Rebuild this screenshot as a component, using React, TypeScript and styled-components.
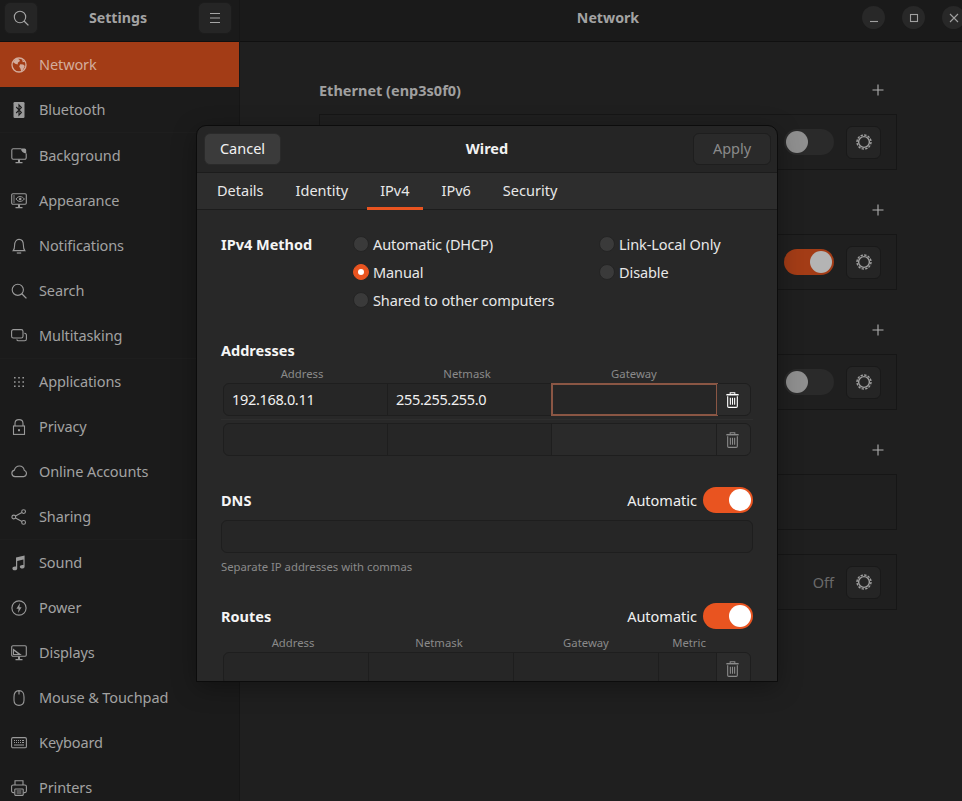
import type { ReactNode } from "react";
import styled, { createGlobalStyle } from "styled-components";

const GlobalStyle = createGlobalStyle`
  html, body {
    margin: 0;
    padding: 0;
    background: #1f1f1f;
  }
  body {
    font-family: "Noto Sans", "Open Sans", sans-serif;
    font-size: 14.5px;
  }
`;

const SIDEBAR_ICONS: Record<string, ReactNode> = {
  Network: (
    <>
      <circle cx="8" cy="8" r="7" fill="none" stroke="currentColor" strokeWidth="1.3" />
      <path d="M5 1.8l3 .4 1 1.8-2 1.4-.4 2-2.4-.6L2 5zM9.2 7.2l3 .3 1.6 1.6-1.6 3.4-2 2-.8-3-1.2-2zM11 2.4l2.6 2.4-1.8.4z" fill="currentColor" />
    </>
  ),
  Bluetooth: (
    <>
      <rect x="2.5" y="0" width="11" height="16" rx="1.2" fill="currentColor" />
      <path d="M5.2 5l5.2 5.4L8 13V3l2.4 2.6L5.2 11" fill="none" stroke="#1b1b1b" strokeWidth="1.1" />
    </>
  ),
  Background: (
    <>
      <path d="M10 .8H2.2A1.4 1.4 0 0 0 .8 2.2v7.6a1.4 1.4 0 0 0 1.4 1.4h11.6a1.4 1.4 0 0 0 1.4-1.4V5.6" fill="none" stroke="currentColor" strokeWidth="1.1" />
      <path d="M10 .4h3.6a1.6 1.6 0 0 1 1.6 1.6v3.4a5 5 0 0 1-5.2-5z" fill="currentColor" />
      <path d="M7 11.5h2V14H7zM4.5 14h7v1.2h-7z" fill="currentColor" />
    </>
  ),
  Appearance: (
    <>
      <rect x=".7" y=".7" width="14.6" height="10.6" rx="1.2" fill="none" stroke="currentColor" strokeWidth="1.1" />
      <path d="M2.2 3h1.6M2.2 5h1.6M2.2 7h1.6M2.2 9h1.6" stroke="currentColor" strokeWidth="1" />
      <path d="M5 6c2-3.2 6-3.2 8.4 0-2.4 3.2-6.4 3.2-8.4 0z" fill="none" stroke="currentColor" strokeWidth="1" />
      <circle cx="9.2" cy="6" r="1.3" fill="currentColor" />
      <path d="M7 11.5h2V14H7zM4.5 14h7v1.2h-7z" fill="currentColor" />
    </>
  ),
  Notifications: (
    <>
      <path d="M2.2 12.6c1.2-1.4 1.4-2.6 1.4-5.4 0-3.4 1.8-5.8 4.4-5.8s4.4 2.4 4.4 5.8c0 2.8.2 4 1.4 5.4z" fill="none" stroke="currentColor" strokeWidth="1.1" />
      <path d="M5.8 14.4h4.4v1.2H5.8z" fill="currentColor" />
    </>
  ),
  Search: (
    <>
      <circle cx="6.8" cy="6.8" r="5.6" fill="none" stroke="currentColor" strokeWidth="1.1" />
      <path d="M10.8 10.8l4.6 4.6" stroke="currentColor" strokeWidth="1.3" />
    </>
  ),
  Multitasking: (
    <>
      <rect x=".6" y="1.6" width="11.4" height="8.4" rx="1.8" fill="none" stroke="currentColor" strokeWidth="1.1" />
      <path d="M13.4 5.4h.4a1.6 1.6 0 0 1 1.6 1.6v4a1.8 1.8 0 0 1-1.8 1.8H7.4a1.6 1.6 0 0 1-1.6-1.4" fill="none" stroke="currentColor" strokeWidth="1.1" />
    </>
  ),
  Applications: (
    <path d="M3 3h1.6v1.6H3zM7.2 3h1.6v1.6H7.2zM11.4 3H13v1.6h-1.6zM3 7.2h1.6v1.6H3zM7.2 7.2h1.6v1.6H7.2zM11.4 7.2H13v1.6h-1.6zM3 11.4h1.6V13H3zM7.2 11.4h1.6V13H7.2zM11.4 11.4H13V13h-1.6z" fill="currentColor" />
  ),
  Privacy: (
    <>
      <rect x="2.5" y="7" width="11" height="8.4" fill="none" stroke="currentColor" strokeWidth="1.1" />
      <path d="M4 7V4.4C4 2 5.6.6 8 .6s4 1.4 4 3.8V7" fill="none" stroke="currentColor" strokeWidth="1.1" />
      <rect x="7" y="10.2" width="2" height="2" fill="currentColor" />
    </>
  ),
  "Online Accounts": (
    <path d="M4 12.6a3.3 3.3 0 0 1-.6-6.5C4 3.6 6 2 8.4 2c2.6 0 4.4 1.8 4.8 4.2a3.3 3.3 0 0 1-.6 6.4z" fill="none" stroke="currentColor" strokeWidth="1.1" />
  ),
  Sharing: (
    <>
      <circle cx="2.8" cy="8" r="1.9" fill="none" stroke="currentColor" strokeWidth="1.1" />
      <circle cx="12.6" cy="2.6" r="1.9" fill="none" stroke="currentColor" strokeWidth="1.1" />
      <circle cx="12.6" cy="13.4" r="1.9" fill="none" stroke="currentColor" strokeWidth="1.1" />
      <path d="M4.5 7l6.4-3.5M4.5 9l6.4 3.5" stroke="currentColor" strokeWidth="1.1" />
    </>
  ),
  Sound: (
    <path d="M5 2.6L13.6.4v11h-1.2V4.4L6.2 6v7.4H5zM1.4 13.4c0-1.2 1.2-1.9 2.6-1.9h2.2v1.9c0 1.2-1.2 1.9-2.4 1.9s-2.4-.7-2.4-1.9zM8.8 11.8c0-1.1 1.2-1.8 2.5-1.8h2.3v1.8c0 1.2-1.2 1.8-2.4 1.8s-2.4-.6-2.4-1.8z" fill="currentColor" />
  ),
  Power: (
    <>
      <circle cx="8" cy="8" r="7.1" fill="none" stroke="currentColor" strokeWidth="1.1" />
      <path d="M9 3L5.4 8.8h2.2L7 13l3.6-5.8H8.4z" fill="currentColor" />
    </>
  ),
  Displays: (
    <>
      <rect x=".7" y=".7" width="14.6" height="10.6" rx="1.2" fill="none" stroke="currentColor" strokeWidth="1.1" />
      <path d="M2 3.4l8.8 6.6H2zM3 6v3h4z" fill="currentColor" fillRule="evenodd" />
      <path d="M7 11.5h2V14H7zM4.5 14h7v1.2h-7z" fill="currentColor" />
    </>
  ),
  "Mouse & Touchpad": (
    <path d="M8 .6c3.4 0 5 2.2 5 6.4v3.2c0 3.4-2 5.2-5 5.2s-5-1.8-5-5.2V7C3 2.8 4.6.6 8 .6zM8 .6v4" fill="none" stroke="currentColor" strokeWidth="1.1" />
  ),
  Keyboard: (
    <>
      <rect x=".6" y="2.6" width="14.8" height="10.2" rx="1.4" fill="none" stroke="currentColor" strokeWidth="1.1" />
      <path d="M3 5h1v1H3zM5 5h1v1H5zM7 5h1v1H7zM9 5h1v1H9zM11 5h2v1h-2zM3 7h1v1H3zM5 7h1v1H5zM7 7h1v1H7zM9 7h1v1H9zM11 7h2v1h-2zM3 9.5h10v1H3z" fill="currentColor" />
    </>
  ),
  Printers: (
    <>
      <path d="M4 5V.8h8V5" fill="none" stroke="currentColor" strokeWidth="1.1" />
      <path d="M3.4 12.6H2.2A1.6 1.6 0 0 1 .6 11V6.6A1.6 1.6 0 0 1 2.2 5h11.6a1.6 1.6 0 0 1 1.6 1.6V11a1.6 1.6 0 0 1-1.6 1.6h-1.2" fill="none" stroke="currentColor" strokeWidth="1.1" />
      <rect x="3.8" y="9" width="8.4" height="6.4" rx=".6" fill="none" stroke="currentColor" strokeWidth="1.1" />
      <path d="M5.6 11h4.8M5.6 13h4.8" stroke="currentColor" strokeWidth="1.1" />
    </>
  ),
};

const SIDEBAR_ITEMS: (string | null)[] = [
  "Network",
  "Bluetooth",
  null,
  "Background",
  "Appearance",
  "Notifications",
  "Search",
  "Multitasking",
  null,
  "Applications",
  "Privacy",
  "Online Accounts",
  "Sharing",
  null,
  "Sound",
  "Power",
  "Displays",
  "Mouse & Touchpad",
  "Keyboard",
  "Printers",
];

function GearIcon() {
  return (
    <svg width="16" height="16" viewBox="0 0 16 16">
      <circle cx="8" cy="8" r="5.4" fill="none" stroke="currentColor" strokeWidth="1.4" />
      <circle cx="8" cy="8" r="7" fill="none" stroke="currentColor" strokeWidth="1.4" strokeDasharray="2.4 1.26" />
    </svg>
  );
}

function PlusIcon() {
  return (
    <svg width="12" height="12" viewBox="0 0 12 12">
      <path d="M6 .5v11M.5 6h11" stroke="currentColor" strokeWidth="1.1" />
    </svg>
  );
}

function TrashIcon() {
  return (
    <svg width="13" height="16" viewBox="0 0 14 17">
      <path d="M4.5 2V.6h5V2" fill="none" stroke="currentColor" strokeWidth="1.1" />
      <path d="M.4 2h13.2v1.6H.4z" fill="currentColor" />
      <path d="M1.8 4.4v10.8c0 .8.5 1.2 1.2 1.2h8c.7 0 1.2-.4 1.2-1.2V4.4" fill="none" stroke="currentColor" strokeWidth="1.2" />
      <path d="M4.7 6v7.5M7 6v7.5M9.3 6v7.5" stroke="currentColor" strokeWidth="1.2" />
    </svg>
  );
}

function NetworkRow({ control }: { control: ReactNode }) {
  return (
    <Frame>
      {control}
      <GearButton>
        <GearIcon />
      </GearButton>
    </Frame>
  );
}

function AddressRow({
  columns,
  values = [],
  focusIndex,
  lightIndex,
  trashDim,
}: {
  columns: string;
  values?: string[];
  focusIndex?: number;
  lightIndex?: number;
  trashDim?: boolean;
}) {
  const count = columns.split(" ").length - 1;
  return (
    <EntryRow $columns={columns}>
      {Array.from({ length: count }).map((_, i) => (
        <Cell key={i} $focus={focusIndex === i} $light={lightIndex === i}>
          {values[i]}
        </Cell>
      ))}
      <TrashCell $dim={trashDim}>
        <TrashIcon />
      </TrashCell>
    </EntryRow>
  );
}

export default function App() {
  const addrCols = "164px 164px 165px 33px";
  const addrHeads = "158px 172px 162px";
  const routeCols = "145px 145px 145px 58px 33px";
  const routeHeads = "140px 152px 142px 64px";

  return (
    <>
      <GlobalStyle />
      <Desktop>
        <Sidebar>
          <SidebarHeader>
            <HeaderButton>
              <svg width="16" height="16" viewBox="0 0 16 16">
                <circle cx="7" cy="7" r="5.7" fill="none" stroke="currentColor" strokeWidth="1.1" />
                <path d="M11 11l4.4 4.4" stroke="currentColor" strokeWidth="1.3" />
              </svg>
            </HeaderButton>
            <SidebarTitle>Settings</SidebarTitle>
            <HeaderButton>
              <svg width="12" height="12" viewBox="0 0 12 12">
                <path d="M1 1.5h10M1 6h10M1 10.5h10" stroke="currentColor" strokeWidth="1" />
              </svg>
            </HeaderButton>
          </SidebarHeader>
          <SidebarList>
            {SIDEBAR_ITEMS.map((item, i) =>
              item === null ? (
                <SidebarSeparator key={i} />
              ) : (
                <SidebarRow key={item} $active={item === "Network"}>
                  <svg width="16" height="16" viewBox="0 0 16 16">
                    {SIDEBAR_ICONS[item]}
                  </svg>
                  <SidebarLabel>{item}</SidebarLabel>
                </SidebarRow>
              ),
            )}
          </SidebarList>
        </Sidebar>

        <Main>
          <MainHeader>
            <MainTitle>Network</MainTitle>
            <WindowControls>
              <WindowButton>
                <svg width="10" height="10" viewBox="0 0 10 10">
                  <path d="M1 8.5h8" stroke="currentColor" strokeWidth="1.1" />
                </svg>
              </WindowButton>
              <WindowButton>
                <svg width="10" height="10" viewBox="0 0 10 10">
                  <rect x="1.5" y="1.5" width="7" height="7" fill="none" stroke="currentColor" strokeWidth="1.1" />
                </svg>
              </WindowButton>
              <WindowButton>
                <svg width="10" height="10" viewBox="0 0 10 10">
                  <path d="M1 1l8 8M9 1l-8 8" stroke="currentColor" strokeWidth="1.1" />
                </svg>
              </WindowButton>
            </WindowControls>
          </MainHeader>
          <MainContent>
            <Section>
              <SectionHeading>
                Ethernet (enp3s0f0)
                <PlusButton>
                  <PlusIcon />
                </PlusButton>
              </SectionHeading>
              <NetworkRow control={<BgSwitch />} />
            </Section>
            <Section>
              <SectionHeading>
                <PlusButton>
                  <PlusIcon />
                </PlusButton>
              </SectionHeading>
              <NetworkRow control={<BgSwitch $on />} />
            </Section>
            <Section>
              <SectionHeading>
                <PlusButton>
                  <PlusIcon />
                </PlusButton>
              </SectionHeading>
              <NetworkRow control={<BgSwitch />} />
            </Section>
            <Section>
              <SectionHeading>
                <PlusButton>
                  <PlusIcon />
                </PlusButton>
              </SectionHeading>
              <EmptyFrame />
            </Section>
            <LastFrame>
              <NetworkRow control={<OffLabel>Off</OffLabel>} />
            </LastFrame>
          </MainContent>
        </Main>

        <Dialog>
          <DialogHeader>
            <CancelButton>Cancel</CancelButton>
            <DialogTitle>Wired</DialogTitle>
            <ApplyButton>Apply</ApplyButton>
          </DialogHeader>
          <Tabs>
            <Tab>Details</Tab>
            <Tab>Identity</Tab>
            <Tab $active>IPv4</Tab>
            <Tab>IPv6</Tab>
            <Tab>Security</Tab>
          </Tabs>
          <DialogBody>
            <MethodGrid>
              <BoldLabel>IPv4 Method</BoldLabel>
              <RadioColumn>
                <RadioRow>
                  <Radio />
                  Automatic (DHCP)
                </RadioRow>
                <RadioRow>
                  <Radio $checked />
                  Manual
                </RadioRow>
                <RadioRow>
                  <Radio />
                  Shared to other computers
                </RadioRow>
              </RadioColumn>
              <RadioColumn>
                <RadioRow>
                  <Radio />
                  Link-Local Only
                </RadioRow>
                <RadioRow>
                  <Radio />
                  Disable
                </RadioRow>
              </RadioColumn>
            </MethodGrid>

            <AddressesBlock>
              <BoldLabel>Addresses</BoldLabel>
              <ColumnHeads $columns={addrHeads}>
                <span>Address</span>
                <span>Netmask</span>
                <span>Gateway</span>
              </ColumnHeads>
              <AddressRow columns={addrCols} values={["192.168.0.11", "255.255.255.0"]} focusIndex={2} />
              <RowDivider />
              <AddressRow columns={addrCols} lightIndex={2} trashDim />
            </AddressesBlock>

            <DnsBlock>
              <TitleRow>
                <BoldLabel>DNS</BoldLabel>
                <AutoGroup>
                  Automatic
                  <DialogSwitch />
                </AutoGroup>
              </TitleRow>
              <WideEntry />
              <Hint>Separate IP addresses with commas</Hint>
            </DnsBlock>

            <RoutesBlock>
              <TitleRow>
                <BoldLabel>Routes</BoldLabel>
                <AutoGroup>
                  Automatic
                  <DialogSwitch />
                </AutoGroup>
              </TitleRow>
              <ColumnHeads $columns={routeHeads} $tight>
                <span>Address</span>
                <span>Netmask</span>
                <span>Gateway</span>
                <span>Metric</span>
              </ColumnHeads>
              <AddressRow columns={routeCols} trashDim />
            </RoutesBlock>
          </DialogBody>
        </Dialog>
      </Desktop>
    </>
  );
}

const Desktop = styled.div`
  position: relative;
  width: 962px;
  height: 801px;
  display: flex;
  overflow: hidden;
  background: #1f1f1f;
`;

const Sidebar = styled.aside`
  width: 240px;
  box-sizing: border-box;
  flex-shrink: 0;
  border-right: 1px solid #161616;
  background: #1b1b1b;
  display: flex;
  flex-direction: column;
`;

const SidebarHeader = styled.div`
  box-sizing: border-box;
  height: 42px;
  flex-shrink: 0;
  border-bottom: 1px solid #101010;
  background: #1a1a1a;
  padding: 2px 7px 0 4px;
  display: flex;
  justify-content: space-between;
  align-items: flex-start;
`;

const HeaderButton = styled.div`
  width: 34px;
  height: 32px;
  border: 1px solid #1c1c1c;
  border-radius: 6px;
  background: #252525;
  color: #a6a6a6;
  display: flex;
  align-items: center;
  justify-content: center;
  box-sizing: border-box;
`;

const SidebarTitle = styled.div`
  color: #a3a3a3;
  font-weight: 700;
  font-size: 14.2px;
  line-height: 31px;
`;

const SidebarList = styled.div`
  display: flex;
  flex-direction: column;
`;

const SidebarRow = styled.div<{ $active?: boolean }>`
  height: 45px;
  flex-shrink: 0;
  padding-left: 11px;
  display: flex;
  align-items: center;
  gap: 12px;
  color: ${(p) => (p.$active ? "#d4ac9c" : "#a2a2a2")};
  background: ${(p) => (p.$active ? "#a33c16" : "transparent")};
  svg {
    flex-shrink: 0;
    color: ${(p) => (p.$active ? "#d4ac9c" : "#9a9a9a")};
  }
`;

const SidebarLabel = styled.span`
  letter-spacing: -0.1px;
  margin-top: -1px;
`;

const SidebarSeparator = styled.div`
  height: 1px;
  flex-shrink: 0;
  background: #1e1e1e;
`;

const Main = styled.main`
  flex: 1;
  display: flex;
  flex-direction: column;
  min-width: 0;
`;

const MainHeader = styled.div`
  position: relative;
  height: 42px;
  flex-shrink: 0;
  box-sizing: border-box;
  border-bottom: 1px solid #101010;
  background: #1a1a1a;
  padding: 0 0 6px 14px;
  display: flex;
  align-items: center;
  justify-content: center;
`;

const MainTitle = styled.div`
  color: #a3a3a3;
  font-weight: 700;
  font-size: 14.2px;
`;

const WindowControls = styled.div`
  position: absolute;
  top: 6px;
  right: -3px;
  display: flex;
  gap: 17px;
`;

const WindowButton = styled.div`
  width: 23px;
  height: 23px;
  border-radius: 50%;
  background: #282828;
  color: #a0a0a0;
  display: flex;
  align-items: center;
  justify-content: center;
`;

const MainContent = styled.div`
  padding: 36px 65px 0 79px;
  display: flex;
  flex-direction: column;
  gap: 28px;
`;

const Section = styled.section`
  display: flex;
  flex-direction: column;
  gap: 12px;
`;

const SectionHeading = styled.div`
  height: 24px;
  padding-right: 13px;
  display: flex;
  align-items: center;
  color: #a0a0a0;
  font-weight: 700;
  font-size: 14.5px;
`;

const PlusButton = styled.span`
  margin-left: auto;
  color: #b0b0b0;
  display: flex;
`;

const Frame = styled.div`
  height: 56px;
  box-sizing: border-box;
  border: 1px solid #161616;
  background: #1f1f1f;
  padding-right: 15px;
  display: flex;
  align-items: center;
  justify-content: flex-end;
  gap: 12px;
`;

const EmptyFrame = styled(Frame)``;

const LastFrame = styled.div`
  margin-top: -4px;
`;

const GearButton = styled.div`
  width: 35px;
  height: 33px;
  box-sizing: border-box;
  border: 1px solid #191919;
  border-radius: 6px;
  background: #252525;
  color: #a0a0a0;
  display: flex;
  align-items: center;
  justify-content: center;
`;

const BgSwitch = styled.div<{ $on?: boolean }>`
  position: relative;
  width: 50px;
  height: 26px;
  border-radius: 13px;
  background: ${(p) => (p.$on ? "#a33c16" : "#2a2a2a")};
  &::after {
    content: "";
    position: absolute;
    top: 2px;
    left: ${(p) => (p.$on ? "26px" : "2px")};
    width: 22px;
    height: 22px;
    border-radius: 50%;
    background: ${(p) => (p.$on ? "#b4b4b4" : "#8f8f8f")};
  }
`;

const OffLabel = styled.span`
  color: #6a6a6a;
`;

const Dialog = styled.div`
  position: absolute;
  left: 197px;
  top: 126px;
  width: 580px;
  height: 555px;
  border-radius: 9px 9px 0 0;
  background: #282828;
  outline: 1px solid #0c0c0c;
  box-shadow: 0 6px 24px rgba(0, 0, 0, 0.35);
  overflow: hidden;
  display: flex;
  flex-direction: column;
  color: #f2f2f2;
`;

const DialogHeader = styled.div`
  height: 47px;
  flex-shrink: 0;
  box-sizing: border-box;
  border-bottom: 1px solid #1c1c1c;
  background: #252525;
  padding: 7px 6px 0 7px;
  display: flex;
  justify-content: space-between;
  align-items: flex-start;
`;

const DialogTitle = styled.div`
  font-weight: 700;
  line-height: 30px;
`;

const CancelButton = styled.div`
  width: 77px;
  height: 32px;
  box-sizing: border-box;
  border: 1px solid #2a2a2a;
  border-radius: 6px;
  background: #3b3b3b;
  text-align: center;
  line-height: 28px;
`;

const ApplyButton = styled(CancelButton)`
  width: 78px;
  border-color: #1e1e1e;
  background: #2a2a2a;
  color: #8a8a8a;
`;

const Tabs = styled.div`
  height: 37px;
  flex-shrink: 0;
  box-sizing: border-box;
  border-bottom: 1px solid #1c1c1c;
  background: #2d2d2d;
  padding-left: 4px;
  display: flex;
`;

const Tab = styled.div<{ $active?: boolean }>`
  position: relative;
  padding: 0 16px;
  line-height: 35px;
  color: #e8e8e8;
  &::after {
    content: "";
    display: ${(p) => (p.$active ? "block" : "none")};
    position: absolute;
    left: 3px;
    right: 3px;
    bottom: -1px;
    height: 3px;
    background: #e95420;
  }
`;

const DialogBody = styled.div`
  padding: 20px 24px 0;
  display: flex;
  flex-direction: column;
`;

const MethodGrid = styled.div`
  display: grid;
  grid-template-columns: 132px 246px 1fr;
  letter-spacing: -0.1px;
`;

const BoldLabel = styled.div`
  font-weight: 700;
  letter-spacing: 0;
  line-height: 28px;
  color: #f5f5f5;
`;

const RadioColumn = styled.div`
  display: flex;
  flex-direction: column;
`;

const RadioRow = styled.div`
  height: 28px;
  display: flex;
  align-items: center;
  gap: 4px;
  color: #e8e8e8;
`;

const Radio = styled.span<{ $checked?: boolean }>`
  position: relative;
  width: 16px;
  height: 16px;
  box-sizing: border-box;
  border-radius: 50%;
  border: 1px solid ${(p) => (p.$checked ? "#e95420" : "#242424")};
  background: ${(p) => (p.$checked ? "#e95420" : "#3a3a3a")};
  &::after {
    content: "";
    display: ${(p) => (p.$checked ? "block" : "none")};
    position: absolute;
    top: 4px;
    left: 4px;
    width: 6px;
    height: 6px;
    border-radius: 50%;
    background: #fff;
  }
`;

const AddressesBlock = styled.div`
  margin-top: 22px;
`;

const ColumnHeads = styled.div<{ $columns: string; $tight?: boolean }>`
  display: grid;
  grid-template-columns: ${(p) => p.$columns};
  margin-left: 2px;
  margin-top: ${(p) => (p.$tight ? "4px" : "1px")};
  height: 18px;
  font-size: 11.3px;
  line-height: 18px;
  color: #8a8a8a;
  text-align: center;
`;

const EntryRow = styled.div<{ $columns: string }>`
  display: grid;
  grid-template-columns: ${(p) => p.$columns};
  height: 33px;
  margin: 0 2px;
  box-sizing: border-box;
  border: 1px solid #1e1e1e;
  border-radius: 6px;
  background: #262626;
`;

const RowDivider = styled.div`
  height: 1px;
  margin: 3px 0;
  background: #2e2e2e;
`;

const Cell = styled.div<{ $focus?: boolean; $light?: boolean }>`
  box-sizing: border-box;
  padding-left: 8px;
  line-height: 30px;
  letter-spacing: -0.33px;
  color: #f0f0f0;
  background: ${(p) => (p.$light ? "#2a2a2a" : "transparent")};
  border-right: 1px solid #1e1e1e;
  ${(p) => (p.$focus ? "outline: 2px solid #8a5644; outline-offset: -1px;" : "")}
  &:first-child {
    border-radius: 5px 0 0 5px;
  }
`;

const TrashCell = styled.div<{ $dim?: boolean }>`
  border-radius: 0 5px 5px 0;
  background: #2b2b2b;
  color: ${(p) => (p.$dim ? "#8a8a8a" : "#ffffff")};
  display: flex;
  align-items: center;
  justify-content: center;
  padding-right: 2px;
`;

const DnsBlock = styled.div`
  margin-top: 30px;
`;

const RoutesBlock = styled.div`
  margin-top: 26px;
`;

const TitleRow = styled.div`
  height: 28px;
  display: flex;
  justify-content: space-between;
  align-items: center;
`;

const AutoGroup = styled.div`
  display: flex;
  align-items: center;
  gap: 6px;
  color: #f0f0f0;
`;

const DialogSwitch = styled.div`
  position: relative;
  width: 50px;
  height: 26px;
  border-radius: 13px;
  background: #e95420;
  &::after {
    content: "";
    position: absolute;
    top: 2px;
    left: 26px;
    width: 22px;
    height: 22px;
    border-radius: 50%;
    background: #ffffff;
  }
`;

const WideEntry = styled.div`
  height: 33px;
  margin-top: 6px;
  box-sizing: border-box;
  border: 1px solid #1e1e1e;
  border-radius: 6px;
  background: #262626;
`;

const Hint = styled.div`
  margin-top: 5px;
  font-size: 11.3px;
  line-height: 18px;
  color: #8a8a8a;
`;
